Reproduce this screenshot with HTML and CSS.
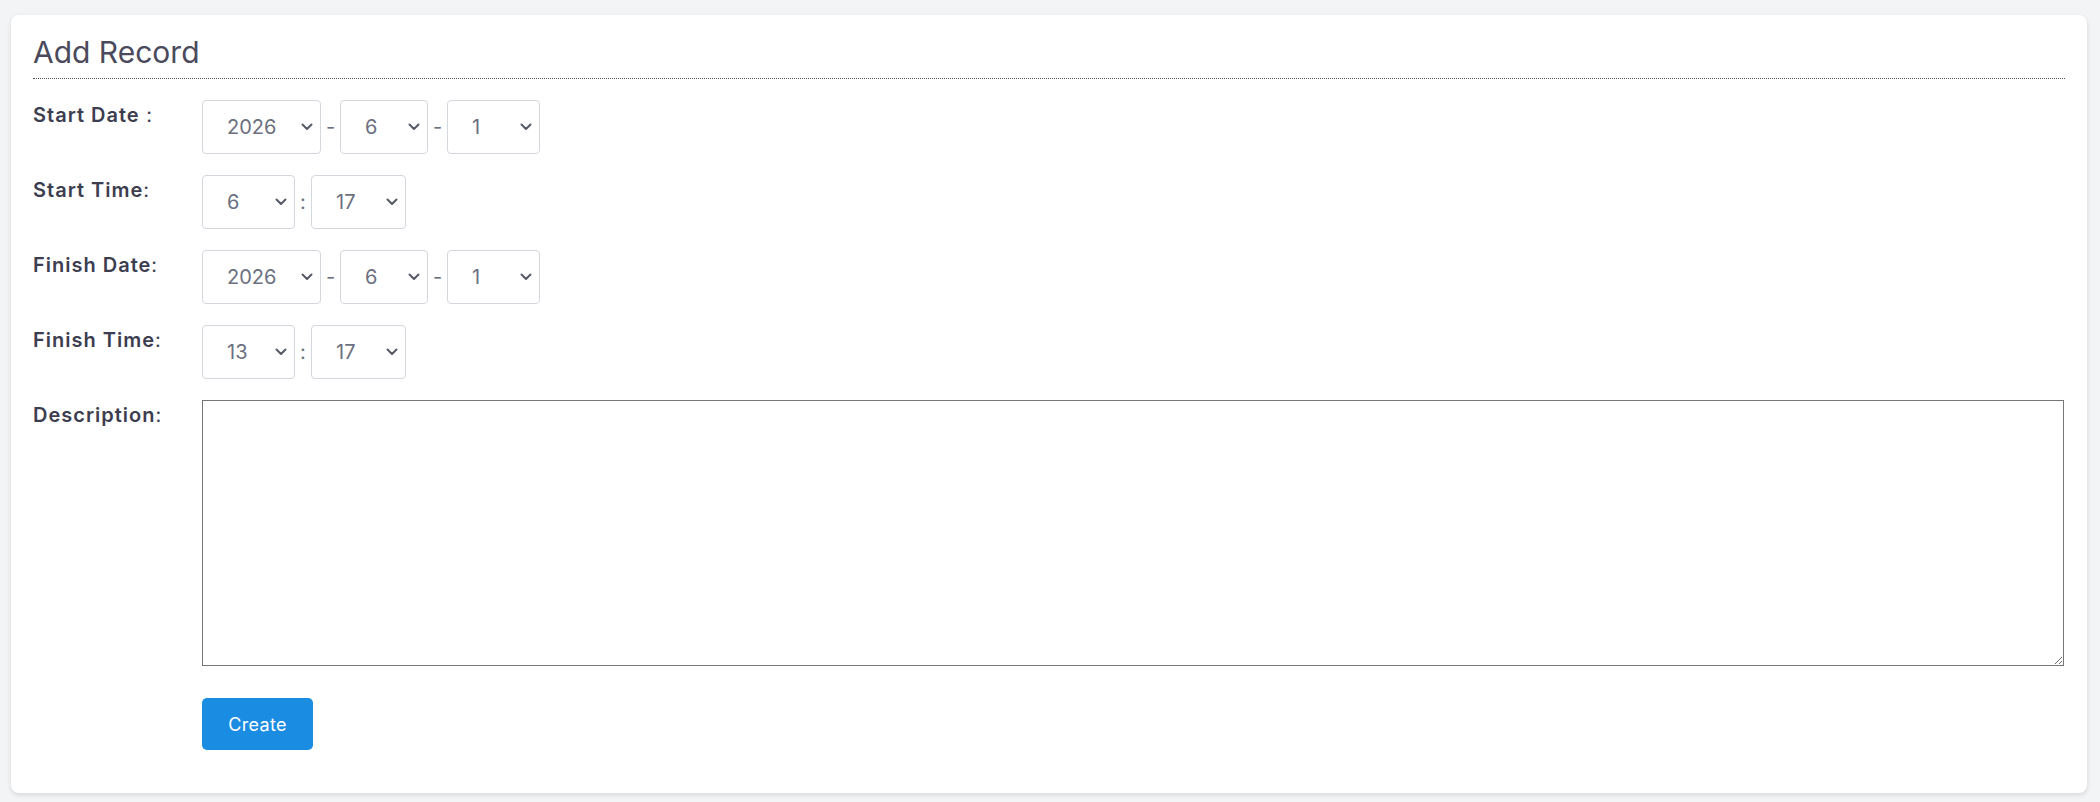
FILE: index.html
```html
<!DOCTYPE html>
<html lang="en">
<head>
<meta charset="utf-8">
<title>Add Record</title>
<link rel="stylesheet" href="styles.css">
</head>
<body>
<div class="page">
  <div class="card">
    <h2 class="card-title">Add Record</h2>
    <form class="form">
      <div class="row">
        <label class="label"><span class="lbl">Start Date</span> :</label>
        <div class="controls">
          <select class="sel w-year"><option>2026</option></select>
          <span class="sep">-</span>
          <select class="sel w-month"><option>6</option></select>
          <span class="sep">-</span>
          <select class="sel w-day"><option>1</option></select>
        </div>
      </div>
      <div class="row">
        <label class="label"><span class="lbl">Start Time</span>:</label>
        <div class="controls">
          <select class="sel w-hour"><option>6</option></select>
          <span class="sep colon">:</span>
          <select class="sel w-min"><option>17</option></select>
        </div>
      </div>
      <div class="row">
        <label class="label"><span class="lbl">Finish Date</span>:</label>
        <div class="controls">
          <select class="sel w-year"><option>2026</option></select>
          <span class="sep">-</span>
          <select class="sel w-month"><option>6</option></select>
          <span class="sep">-</span>
          <select class="sel w-day"><option>1</option></select>
        </div>
      </div>
      <div class="row">
        <label class="label"><span class="lbl">Finish Time</span>:</label>
        <div class="controls">
          <select class="sel w-hour"><option>13</option></select>
          <span class="sep colon">:</span>
          <select class="sel w-min"><option>17</option></select>
        </div>
      </div>
      <div class="row">
        <label class="label"><span class="lbl">Description</span>:</label>
        <div class="controls">
          <textarea class="desc"></textarea>
        </div>
      </div>
      <div class="row actions">
        <div></div>
        <div class="controls">
          <button type="button" class="btn">Create</button>
        </div>
      </div>
    </form>
  </div>
</div>
</body>
</html>
```
FILE: styles.css
```css
* { box-sizing: border-box; }
html, body {
  margin: 0;
  padding: 0;
  background: #f3f4f6;
  font-family: Inter, "Open Sans", "Liberation Sans", sans-serif;
}
.page {
  padding: 15px 13px 9px 11px;
}
.card {
  background: #ffffff;
  border-radius: 8px;
  box-shadow: 0 2px 5px rgba(0, 0, 0, 0.12);
  padding: 18px 22px 43px 22px;
  height: 778px;
}
.card-title {
  margin: 0;
  font-size: 30px;
  font-weight: 400;
  line-height: 38px;
  color: #4a4a5c;
  padding-bottom: 7px;
  border-bottom: 1px dotted #555;
  letter-spacing: 0;
}
.form {
  display: flex;
  flex-direction: column;
  gap: 21px;
  margin-top: 21px;
}
.row {
  display: grid;
  grid-template-columns: 169px 1fr;
  align-items: start;
}
.label {
  font-size: 20px;
  line-height: 30px;
  color: #3d3d50;
  font-weight: 400;
  letter-spacing: 1px;
}
.lbl { font-weight: 600; }
.controls {
  display: flex;
  align-items: center;
}
.sel {
  -webkit-appearance: none;
  appearance: none;
  height: 54px;
  border: 1px solid #d4d7dd;
  border-radius: 4px;
  background-color: #fff;
  background-image: url("data:image/svg+xml;utf8,<svg xmlns='http://www.w3.org/2000/svg' width='12' height='8' viewBox='0 0 12 8'><path d='M1.5 1.5 L6 6 L10.5 1.5' fill='none' stroke='%23555a66' stroke-width='2' stroke-linecap='round' stroke-linejoin='round'/></svg>");
  background-repeat: no-repeat;
  background-position: right 7px center;
  background-size: 12px 8px;
  font-family: Inter, "Open Sans", "Liberation Sans", sans-serif;
  font-size: 20px;
  color: #6b7080;
  padding: 0 20px 0 24px;
  margin: 0;
}
.w-year { width: 119px; }
.w-month { width: 88px; }
.w-day { width: 93px; }
.w-hour { width: 93px; }
.w-min { width: 95px; }
.sep {
  font-size: 20px;
  color: #6b7080;
  width: 19px;
  text-align: center;
}
.sep.colon { width: 16px; }
.desc {
  width: 1862px;
  height: 266px;
  border: 1px solid #767676;
  border-radius: 0;
  margin: 0;
  font-family: Inter, sans-serif;
  font-size: 16px;
}
.actions { margin-top: 11px; }
.btn {
  background: #1a8ce2;
  color: #ffffff;
  border: none;
  border-radius: 5px;
  width: 111px;
  height: 52px;
  font-family: Inter, "Open Sans", sans-serif;
  font-size: 18px;
  font-weight: 400;
  letter-spacing: 0.3px;
  padding: 0;
}
```
